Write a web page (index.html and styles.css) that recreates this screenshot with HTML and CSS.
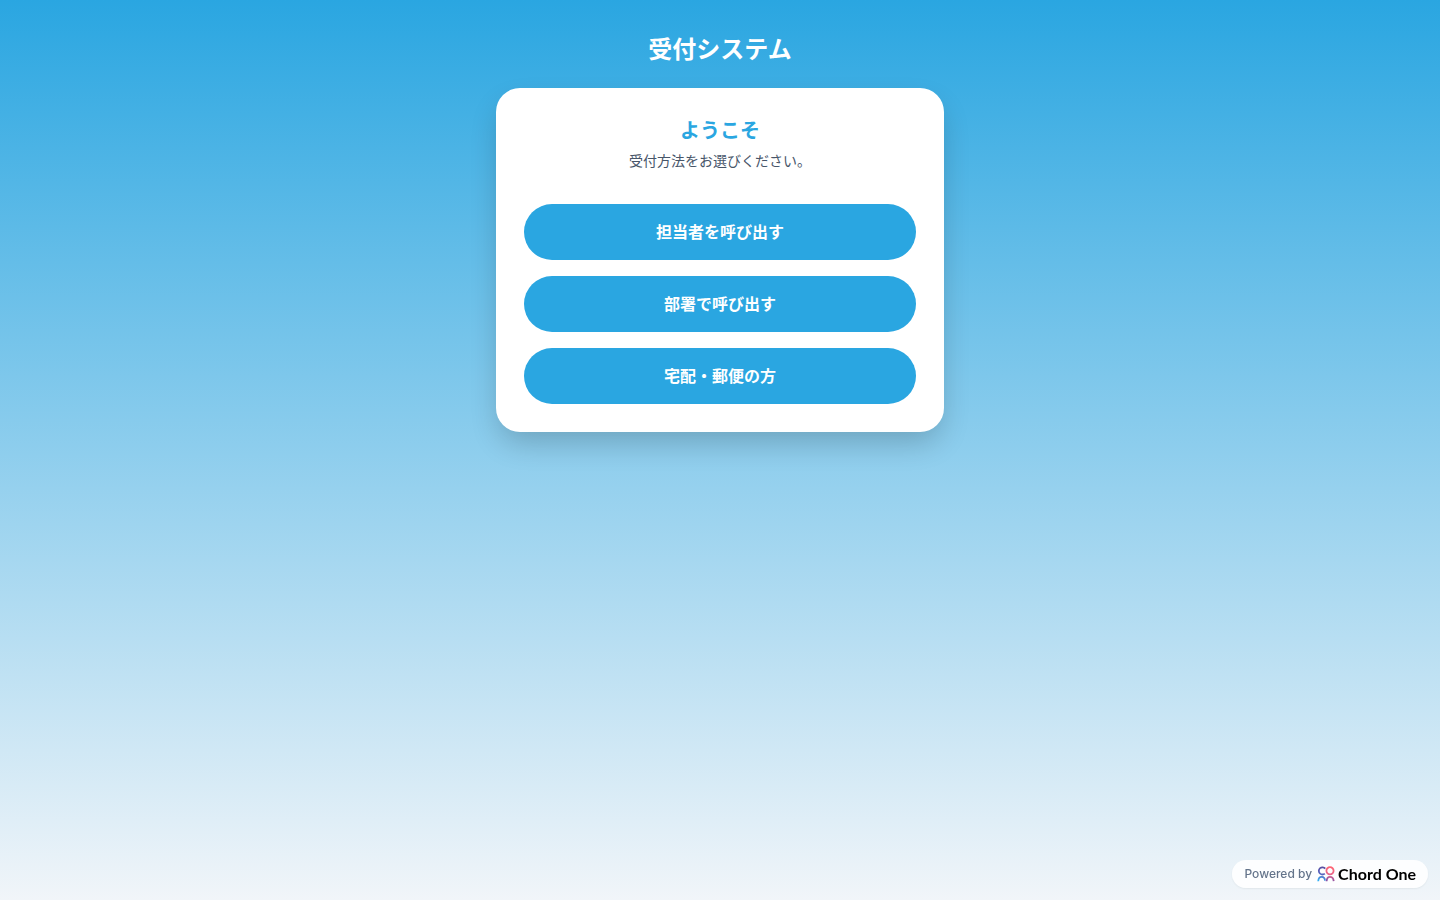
FILE: index.html
```html
<!DOCTYPE html>
<html lang="ja">
<head>
  <meta charset="UTF-8" />
  <meta name="viewport" content="width=device-width, initial-scale=1.0"/>
  <title>受付システム</title>
  <link rel="stylesheet" href="styles.css">
</head>
<body>
  <h1>受付システム</h1>

  <main class="card">
    <h2>ようこそ</h2>
    <p class="lead">受付方法をお選びください。</p>

    <div class="actions">
      <button type="button">担当者を呼び出す</button>
      <button type="button">部署で呼び出す</button>
      <button type="button">宅配・郵便の方</button>
    </div>
  </main>

  <a class="powered" href="#">
    <span class="powered-label">Powered by</span>
    <svg class="logo" viewBox="0 0 18 16" width="18" height="16" aria-hidden="true">
      <defs>
        <linearGradient id="left" x1="8" y1="1" x2="2" y2="15" gradientUnits="userSpaceOnUse">
          <stop offset="0" stop-color="#5a4a9c"/>
          <stop offset="0.5" stop-color="#5a63bd"/>
          <stop offset="1" stop-color="#35b0f5"/>
        </linearGradient>
        <linearGradient id="right" x1="14" y1="1" x2="11" y2="15" gradientUnits="userSpaceOnUse">
          <stop offset="0" stop-color="#ff6473"/>
          <stop offset="0.5" stop-color="#e9688c"/>
          <stop offset="1" stop-color="#8450a8"/>
        </linearGradient>
      </defs>
      <g fill="none" stroke-width="1.8">
        <path stroke="url(#left)" d="M8.2 2.6A3.6 3.6 0 1 0 7.8 7.6M1.2 15.2C1.4 12.4 2.8 10.9 4.8 10.9S7.8 12.2 8 14.6"/>
        <path stroke="url(#right)" d="M13 1.2A3.6 3.6 0 1 1 13 8.4A3.6 3.6 0 1 1 13 1.2M9.6 15.2C9.8 12.4 11.1 10.9 13 10.9S16.4 12.4 16.7 15.2"/>
      </g>
    </svg>
    <span class="brand">Chord One</span>
  </a>
</body>
</html>
```
FILE: styles.css
```css
* {
  box-sizing: border-box;
  margin: 0;
  padding: 0;
}

body {
  font-family: "Noto Sans CJK JP", sans-serif;
  background: linear-gradient(to bottom, #2aa6e1, #f1f5f9);
  display: flex;
  flex-direction: column;
  align-items: center;
  min-height: 100vh;
  padding: 32px 16px;
}

h1 {
  color: #fff;
  font-size: 24px;
  line-height: 32px;
  margin-bottom: 24px;
  text-align: center;
}

.card {
  background: #fff;
  width: 100%;
  max-width: 448px;
  padding: 28px;
  border-radius: 24px;
  box-shadow: 0 14px 30px -4px rgba(0, 0, 0, 0.2);
  text-align: center;
}

h2 {
  color: #2aa6e1;
  font-size: 20px;
  line-height: 28px;
  margin-bottom: 6px;
}

.lead {
  color: #475569;
  font-size: 14px;
  line-height: 20px;
  margin-bottom: 34px;
}

.actions {
  display: flex;
  flex-direction: column;
  gap: 16px;
}

button {
  background: #2aa6e1;
  color: #fff;
  padding: 15px 16px 17px;
  border: none;
  border-radius: 28px;
  font-family: inherit;
  font-size: 16px;
  font-weight: 700;
  line-height: 24px;
  cursor: pointer;
}

button:hover {
  background: #1f97d1;
}

.powered {
  position: fixed;
  right: 12px;
  bottom: 12px;
  display: flex;
  align-items: center;
  padding: 4px 12px;
  border-radius: 14px;
  background: rgba(255, 255, 255, 0.9);
  box-shadow: 0 1px 2px rgba(0, 0, 0, 0.06);
  text-decoration: none;
  line-height: 20px;
}

.powered-label {
  color: #64748b;
  font-family: Inter, sans-serif;
  font-size: 12px;
  font-weight: 500;
  margin-right: 5px;
}

.logo {
  margin-right: 3px;
}

.brand {
  color: #000;
  font-family: Lato, sans-serif;
  font-size: 16px;
  font-weight: 700;
}
```
